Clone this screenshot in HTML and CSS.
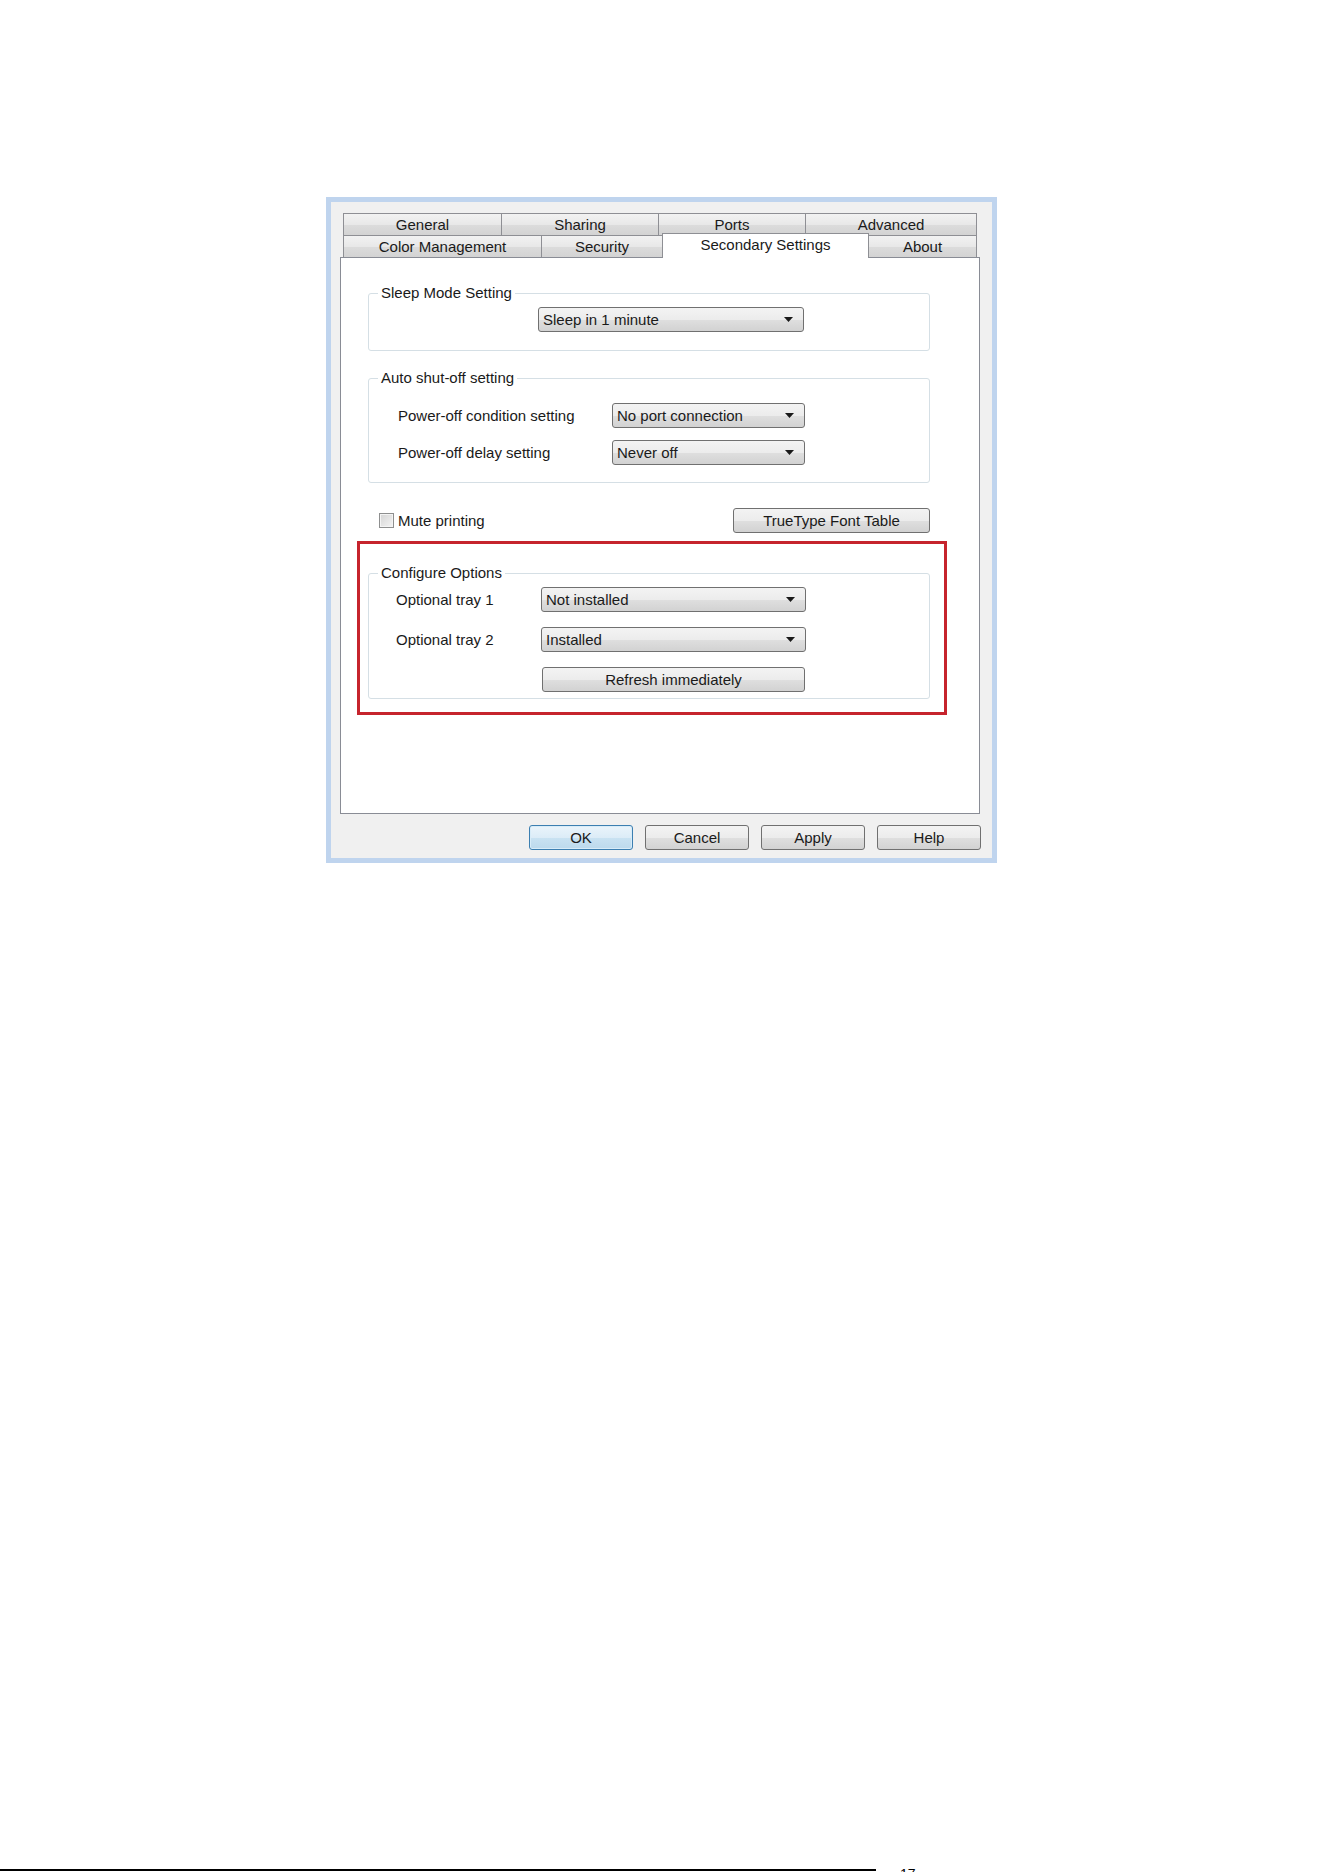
FILE: index.html
```html
<!DOCTYPE html>
<html lang="en">
<head>
<meta charset="utf-8">
<title>Printer Properties - Secondary Settings</title>
<link rel="stylesheet" href="styles.css">
</head>
<body>
<main class="page">
  <div class="dialog">
    <div class="tabs">
      <div class="tab-row row-back">
        <div class="tab w-general">General</div>
        <div class="tab w-sharing">Sharing</div>
        <div class="tab w-ports">Ports</div>
        <div class="tab w-advanced">Advanced</div>
      </div>
      <div class="tab-row row-front">
        <div class="tab w-color">Color Management</div>
        <div class="tab w-security">Security</div>
        <div class="tab tab-active w-secondary">Secondary Settings</div>
        <div class="tab w-about">About</div>
      </div>
    </div>

    <section class="panel">
      <fieldset class="group group-sleep">
        <legend>Sleep Mode Setting</legend>
        <div class="group-body sleep-body">
          <div class="combo combo-sleep"><span>Sleep in 1 minute</span><svg class="arrow" width="9" height="5" viewBox="0 0 9 5"><polygon points="0,0 9,0 4.5,5"/></svg></div>
        </div>
      </fieldset>

      <fieldset class="group group-auto">
        <legend>Auto shut-off setting</legend>
        <div class="group-body field-grid auto-grid">
          <span class="label">Power-off condition setting</span>
          <div class="combo combo-short"><span>No port connection</span><svg class="arrow" width="9" height="5" viewBox="0 0 9 5"><polygon points="0,0 9,0 4.5,5"/></svg></div>
          <span class="label">Power-off delay setting</span>
          <div class="combo combo-short"><span>Never off</span><svg class="arrow" width="9" height="5" viewBox="0 0 9 5"><polygon points="0,0 9,0 4.5,5"/></svg></div>
        </div>
      </fieldset>

      <div class="mute-row">
        <label class="check"><span class="check-box"></span><span>Mute printing</span></label>
        <div class="btn btn-font">TrueType Font Table</div>
      </div>

      <div class="highlight">
        <fieldset class="group group-config">
          <legend>Configure Options</legend>
          <div class="group-body field-grid config-grid">
            <span class="label">Optional tray 1</span>
            <div class="combo combo-wide"><span>Not installed</span><svg class="arrow" width="9" height="5" viewBox="0 0 9 5"><polygon points="0,0 9,0 4.5,5"/></svg></div>
            <span class="label">Optional tray 2</span>
            <div class="combo combo-wide"><span>Installed</span><svg class="arrow" width="9" height="5" viewBox="0 0 9 5"><polygon points="0,0 9,0 4.5,5"/></svg></div>
            <span></span>
            <div class="btn btn-refresh">Refresh immediately</div>
          </div>
        </fieldset>
      </div>
    </section>

    <div class="actions">
      <div class="btn btn-action btn-default">OK</div>
      <div class="btn btn-action">Cancel</div>
      <div class="btn btn-action">Apply</div>
      <div class="btn btn-action">Help</div>
    </div>
  </div>

  <footer class="page-foot">
    <div class="foot-rule"></div>
    <span class="page-num">17</span>
  </footer>
</main>
</body>
</html>
```

FILE: styles.css
```css
* {
  box-sizing: border-box;
}

html, body {
  margin: 0;
  padding: 0;
  background: #ffffff;
}

body {
  font-family: "Liberation Sans", Arial, sans-serif;
  font-size: 15px;
  color: #1a1a1a;
  overflow: hidden;
}

.page {
  padding-top: 197px;
}

/* Window frame */
.dialog {
  margin-left: 326px;
  width: 671px;
  height: 666px;
  border: 5px solid #bfd4ee;
  background: #f0f0f0;
  padding: 11px 12px 8px 9px;
  display: flex;
  flex-direction: column;
}

/* Tab strip: two rows */
.tabs {
  margin-left: 3px;
  width: 634px;
}

.tab-row {
  display: flex;
  align-items: flex-end;
  height: 22px;
}

.tab {
  height: 22px;
  border: 1px solid #8e8f94;
  border-bottom: none;
  background: linear-gradient(#f2f2f2, #e8e8e8 50%, #dcdcdc 51%, #d3d3d3);
  display: flex;
  align-items: center;
  justify-content: center;
  white-space: nowrap;
  line-height: 18px;
}

.tab + .tab {
  margin-left: -1px;
}

.w-general { width: 159px; }
.w-sharing { width: 158px; }
.w-ports { width: 148px; }
.w-advanced { width: 172px; }

.w-color { width: 199px; }
.w-security { width: 122px; }
.w-secondary { width: 207px; }
.w-about { width: 109px; }

.tab-active {
  position: relative;
  z-index: 1;
  height: 25px;
  margin-bottom: -1px;
  background: #ffffff;
  padding-bottom: 3px;
}

/* Page body of the tab */
.panel {
  height: 557px;
  border: 1px solid #898c95;
  background: #ffffff;
  padding-left: 27px;
  display: flex;
  flex-direction: column;
  align-items: flex-start;
}

/* Group boxes */
.group {
  margin: 0;
  width: 562px;
  min-width: 0;
  border: 1px solid #d5dfe5;
  border-radius: 3px;
  padding: 0;
}

.group legend {
  margin-left: 9px;
  padding: 0 3px;
  line-height: 18px;
  height: 18px;
}

.group-sleep {
  margin-top: 26px;
}

.sleep-body {
  padding: 5px 0 18px 169px;
}

.group-auto {
  margin-top: 18px;
}

.auto-grid {
  padding: 16px 0 17px 29px;
}

.field-grid {
  display: grid;
  align-items: center;
}

.auto-grid {
  grid-template-columns: 214px 193px;
  row-gap: 12px;
}

.config-grid {
  grid-template-columns: 145px 265px;
  row-gap: 15px;
  padding: 5px 0 6px 27px;
}

.label {
  white-space: nowrap;
}

/* Drop-down lists */
.combo {
  height: 25px;
  border: 1px solid #707070;
  border-radius: 3px;
  background: linear-gradient(#f3f3f3, #ececec 50%, #dfdfdf 51%, #d2d2d2);
  display: flex;
  align-items: center;
  justify-content: space-between;
  padding: 0 10px 0 4px;
  white-space: nowrap;
}

.combo-sleep { width: 266px; }
.combo-short { width: 193px; }
.combo-wide { width: 265px; }

.arrow {
  fill: #1a1a1a;
  flex: none;
}

/* Buttons */
.btn {
  height: 25px;
  border: 1px solid #707070;
  border-radius: 3px;
  background: linear-gradient(#f3f3f3, #ececec 50%, #dfdfdf 51%, #d2d2d2);
  display: flex;
  align-items: center;
  justify-content: center;
  white-space: nowrap;
}

/* Checkbox row */
.mute-row {
  margin-top: 25px;
  width: 562px;
  height: 25px;
  display: flex;
  align-items: center;
  justify-content: space-between;
}

.check {
  display: flex;
  align-items: center;
  gap: 4px;
  margin-left: 11px;
}

.check-box {
  width: 15px;
  height: 15px;
  border: 1px solid #8e8f8f;
  background: linear-gradient(135deg, #d4d4d4, #f4f4f4);
  box-shadow: inset 0 0 0 1px #f4f4f4;
}

.btn-font {
  width: 197px;
}

/* Red outline around the options group */
.highlight {
  margin-top: 8px;
  margin-left: -11px;
  width: 590px;
  border: 3px solid #c6242d;
  padding: 20px 14px 13px 8px;
}

.btn-refresh {
  width: 263px;
  margin-left: 1px;
}

/* OK / Cancel / Apply / Help */
.actions {
  margin-top: 11px;
  margin-right: -1px;
  display: flex;
  justify-content: flex-end;
  gap: 12px;
}

.btn-action {
  width: 104px;
}

.btn-default {
  border-color: #3c7fb1;
  background: linear-gradient(#eaf4fb, #dcecf7 50%, #c9e2f2 51%, #bcd9ec);
  box-shadow: inset 0 0 0 1px #d8ecf8;
}

/* Page footer rule and number */
.page-foot {
  margin-top: 1003px;
  display: flex;
  align-items: flex-start;
}

.foot-rule {
  margin-top: 3px;
  width: 876px;
  height: 2px;
  background: #000000;
}

.page-num {
  margin-left: 24px;
  font-size: 14px;
  line-height: 16px;
  color: #000000;
}
```
